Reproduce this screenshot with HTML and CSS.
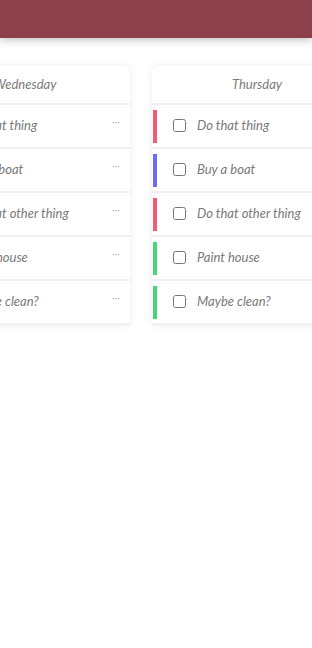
FILE: index.html
```html
<!DOCTYPE html>
<html lang="en">
<head>
    <meta charset="UTF-8">
    <meta name="viewport" content="width=device-width, initial-scale=1.0">
    <title>Week Board</title>
    <link rel="stylesheet" href="styles.css">
</head>
<body>
    <header class="top-bar"></header>

    <div class="board">
        <div class="board-track">
            <div class="day-card">
                <div class="day-title">Wednesday</div>
                <div class="task"><span class="tag red"></span><input type="checkbox"><span class="task-text">Do that thing</span><span class="more">···</span></div>
                <div class="task"><span class="tag blue"></span><input type="checkbox"><span class="task-text">Buy a boat</span><span class="more">···</span></div>
                <div class="task"><span class="tag red"></span><input type="checkbox"><span class="task-text">Do that other thing</span><span class="more">···</span></div>
                <div class="task"><span class="tag green"></span><input type="checkbox"><span class="task-text">Paint house</span><span class="more">···</span></div>
                <div class="task"><span class="tag green"></span><input type="checkbox"><span class="task-text">Maybe clean?</span><span class="more">···</span></div>
            </div>

            <div class="day-card">
                <div class="day-title">Thursday</div>
                <div class="task"><span class="tag red"></span><input type="checkbox"><span class="task-text">Do that thing</span><span class="more">···</span></div>
                <div class="task"><span class="tag blue"></span><input type="checkbox"><span class="task-text">Buy a boat</span><span class="more">···</span></div>
                <div class="task"><span class="tag red"></span><input type="checkbox"><span class="task-text">Do that other thing</span><span class="more">···</span></div>
                <div class="task"><span class="tag green"></span><input type="checkbox"><span class="task-text">Paint house</span><span class="more">···</span></div>
                <div class="task"><span class="tag green"></span><input type="checkbox"><span class="task-text">Maybe clean?</span><span class="more">···</span></div>
            </div>
        </div>
    </div>
</body>
</html>
```

FILE: styles.css
```css
body {
    margin: 0;
    background: #fff;
    font-family: Lato, "Open Sans", sans-serif;
    color: #777;
    overflow: hidden;
}

.top-bar {
    height: 38px;
    background-color: #8e3f4c;
    box-shadow: 0 2px 8px rgba(0, 0, 0, 0.25);
    position: relative;
    z-index: 1;
}

.board {
    overflow: hidden;
    padding: 28px 0 20px;
}

.board-track {
    display: flex;
    gap: 22px;
    margin-left: -80px;
}

.day-card {
    flex: 0 0 210px;
    display: flex;
    flex-direction: column;
    gap: 2px;
    padding-bottom: 2px;
    background: #efeff4;
    border-radius: 6px 6px 0 0;
    box-shadow: 0 0 8px rgba(0, 0, 0, 0.08);
    overflow: hidden;
}

.day-title {
    height: 37px;
    padding-bottom: 2px;
    box-sizing: border-box;
    display: flex;
    align-items: center;
    justify-content: center;
    background: #fff;
    font-size: 13px;
    font-style: italic;
    color: #7a7a7a;
}

.task {
    height: 42px;
    display: flex;
    align-items: center;
    padding: 0 10px 0 1px;
    background: #fff;
}

.tag {
    width: 4px;
    height: 33px;
    margin-right: 16px;
}

.tag.red { background: #f25c6e; }
.tag.blue { background: #6b6bfa; }
.tag.green { background: #47d47b; }

.task input {
    width: 13px;
    height: 13px;
    margin: 0 11px 2px 0;
}

.task-text {
    flex: 1;
    font-size: 13px;
    font-style: italic;
    color: #7a7a7a;
    white-space: nowrap;
    margin-bottom: 3px;
}

.more {
    font-size: 8px;
    color: #8a8fa8;
    letter-spacing: 0.5px;
    margin-bottom: 8px;
}
```
